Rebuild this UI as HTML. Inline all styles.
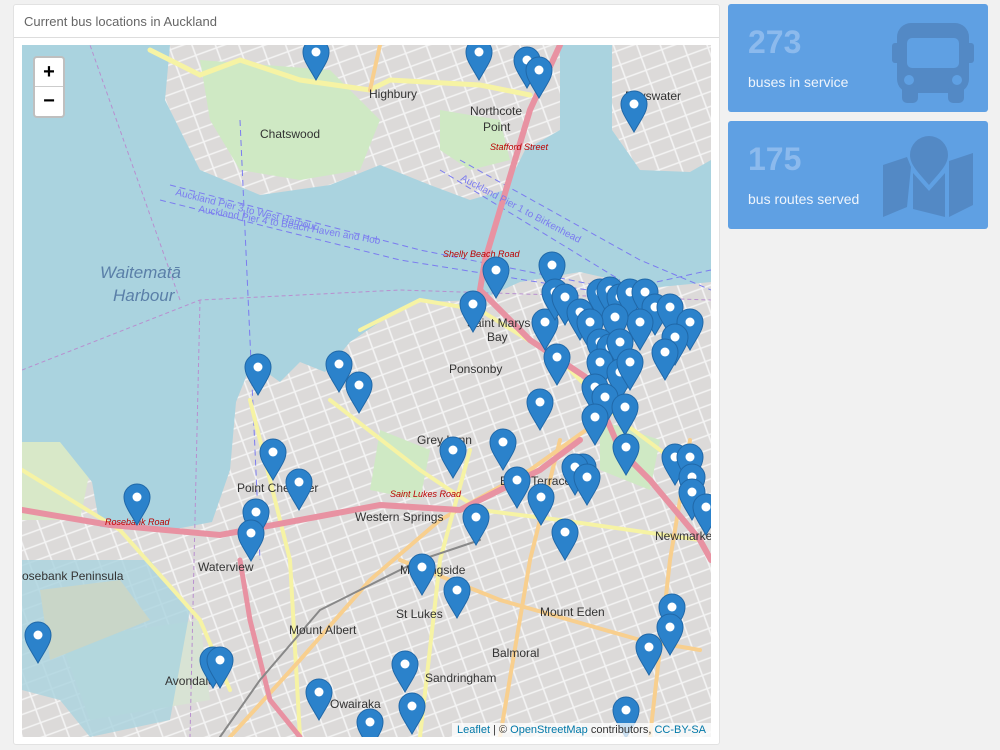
<!DOCTYPE html>
<html><head><meta charset="utf-8"><style>
*{box-sizing:border-box}
body{margin:0;background:#f1f1f1;font-family:"Liberation Sans",sans-serif;width:1000px;height:750px;overflow:hidden;position:relative}
.panel{position:absolute;left:13px;top:4px;width:707px;height:741px;background:#fff;border:1px solid #e2e2e2;border-radius:3px}
.ph{height:33px;border-bottom:1px solid #ddd;padding:9px 10px;font-size:13px;color:#666}
.map{position:absolute;left:22px;top:45px;width:689px;height:692px;overflow:hidden;background:#e2e0df}
.zoom{position:absolute;left:11px;top:11px;width:32px;height:62px;background:#fff;border:2px solid rgba(0,0,0,.25);border-radius:4px}
.zoom div{height:29px;text-align:center;font:bold 20px/29px "Liberation Sans",sans-serif;color:#000}
.zoom div:first-child{border-bottom:1px solid #ccc}
.attr{position:absolute;right:0;bottom:0;background:rgba(255,255,255,.75);font-size:11px;padding:1px 5px;color:#333}
.attr span{color:#0078a8}
.box{position:absolute;left:728px;width:260px;height:108px;background:#5fa0e3;border-radius:3px;color:#fff}
.box .n{position:absolute;left:20px;top:20px;font-size:32px;font-weight:bold;color:#8cbaed}
.box .l{position:absolute;left:20px;top:70px;font-size:14px;color:#eef4fc}
.box svg{position:absolute}
</style></head><body>
<div class="panel"><div class="ph">Current bus locations in Auckland</div></div>
<div class="map">
<svg width="689" height="692" viewBox="22 45 689 692" style="position:absolute;left:0;top:0">
<defs>
<g id="p"><path d="M0,0 C-8,-14 -13,-20 -13,-28 A13,13 0 0 1 13,-28 C13,-20 8,-14 0,0Z" fill="#2b82cb" stroke="#2068a8" stroke-width="1"/><circle cx="0" cy="-28" r="4.5" fill="#fff"/></g>
<pattern id="st" width="22" height="14" patternUnits="userSpaceOnUse" patternTransform="rotate(-20)">
<rect width="22" height="14" fill="#dcdad9"/><path d="M0,7 H22 M11,0 V14" stroke="#f4f4f4" stroke-width="1.6"/></pattern>
</defs>
<rect x="22" y="45" width="689" height="692" fill="url(#st)"/>
<!-- green patches -->
<path d="M200,60 L330,70 L380,120 L360,170 L300,180 L240,170 L210,120Z" fill="#cfe9c4"/>
<path d="M440,110 L500,120 L510,160 L470,170 L440,150Z" fill="#cfe9c4"/>
<path d="M22,420 L70,430 L90,470 L80,520 L22,520Z" fill="#d8e8c8"/>
<path d="M380,430 L430,450 L420,500 L370,490Z" fill="#cfe9c4"/>
<path d="M600,420 L660,440 L650,490 L600,470Z" fill="#cfe9c4"/>
<path d="M60,640 L200,620 L210,700 L90,720Z" fill="#d8e3d4"/>
<!-- water -->
<path d="M22,45 L170,45 L165,100 L200,170 L260,195 L330,185 L380,165 L430,185 L470,200 L505,190 L525,150 L560,130 L560,45 L612,45 L612,130 L640,170 L690,172 L711,160 L711,282 L650,288 L580,272 L520,282 L480,300 L420,302 L380,322 L350,342 L325,372 L300,362 L280,382 L252,362 L236,402 L230,470 L212,522 L160,532 L100,527 L92,482 L60,442 L22,442Z" fill="#aad3df"/>
<path d="M612,45 L711,45 L711,95 L660,100 L630,130 L612,130Z" fill="url(#st)"/>
<path d="M22,560 L150,560 L190,610 L170,720 L90,737 L60,700 L22,690Z" fill="#aad3df" opacity=".8"/>
<path d="M40,590 L120,580 L150,620 L100,640 L50,660Z" fill="#c9d6c8"/>
<!-- ferry lines -->
<g stroke="#7b7bf0" stroke-width="1" stroke-dasharray="6,4" fill="none">
<path d="M170,185 L420,250 L620,290 L711,270"/><path d="M160,200 L400,260 L650,300"/>
<path d="M460,160 L640,260 L711,290"/><path d="M440,170 L620,280"/>
<path d="M240,120 L260,560"/>
</g>
<g stroke="#b88fcf" stroke-width="1" stroke-dasharray="4,3" fill="none">
<path d="M22,370 L200,300 L400,290 L711,300"/><path d="M180,300 L90,45"/><path d="M200,300 L190,737"/>
</g>
<!-- roads -->
<g fill="none" stroke-linecap="round">
<path d="M150,50 L200,75 L240,60 L300,80 L370,90 L390,80 L480,85 L530,95" stroke="#f6f3a4" stroke-width="5"/>
<path d="M370,90 L380,45" stroke="#f8cf8e" stroke-width="4"/>
<path d="M360,330 L420,300 L480,310 L560,360 L620,420 L700,480" stroke="#f6f3a4" stroke-width="4"/>
<path d="M250,400 L270,480 L290,560 L300,737" stroke="#f6f3a4" stroke-width="4"/>
<path d="M330,400 L420,470 L480,510 L560,520 L700,540" stroke="#f6f3a4" stroke-width="4"/>
<path d="M22,470 L120,530 L200,620 L230,690" stroke="#f6f3a4" stroke-width="4"/>
<path d="M230,737 L300,660 L370,580 L440,520 L530,470 L600,420" stroke="#f8cf8e" stroke-width="4"/>
<path d="M400,560 L500,600 L640,640 L700,650" stroke="#f8cf8e" stroke-width="4"/>
<path d="M560,440 L530,560 L500,737" stroke="#f8cf8e" stroke-width="4"/>
<path d="M690,440 L670,560 L650,737" stroke="#f8cf8e" stroke-width="4"/>
<path d="M470,450 L440,560 L420,737" stroke="#f6f3a4" stroke-width="4"/>
<path d="M560,45 L530,110 L515,160 L485,260 L480,290 L530,340 L590,380 L620,450 L650,480 L700,540 L711,560" stroke="#e892a2" stroke-width="6"/>
<path d="M22,510 L110,525 L220,535 L300,520 L380,505 L460,510 L540,470 L580,440" stroke="#e892a2" stroke-width="6"/>
<path d="M240,560 L250,620 L270,700 L300,737" stroke="#e892a2" stroke-width="5"/>
<path d="M220,737 L260,680 L320,610 L420,560 L480,540" stroke="#888" stroke-width="2"/>
</g>
<!-- labels -->
<g font-family="Liberation Sans,sans-serif" font-size="12" fill="#333">
<text x="369" y="98">Highbury</text><text x="260" y="138">Chatswood</text>
<text x="470" y="115">Northcote</text><text x="483" y="131">Point</text>
<text x="625" y="100">Bayswater</text>
<text x="449" y="373">Ponsonby</text><text x="467" y="327">Saint Marys</text><text x="487" y="341">Bay</text>
<text x="417" y="444">Grey Lynn</text><text x="237" y="492">Point Chevalier</text>
<text x="355" y="521">Western Springs</text><text x="198" y="571">Waterview</text>
<text x="22" y="580">osebank Peninsula</text><text x="289" y="634">Mount Albert</text>
<text x="396" y="618">St Lukes</text><text x="540" y="616">Mount Eden</text>
<text x="492" y="657">Balmoral</text><text x="165" y="685">Avondale</text>
<text x="425" y="682">Sandringham</text><text x="330" y="708">Owairaka</text>
<text x="400" y="574">Morningside</text><text x="500" y="485">Eden Terrace</text>
<text x="655" y="540">Newmarket</text>
<text x="100" y="278" font-size="17" font-style="italic" fill="#5a7fa8">Waitematā</text>
<text x="113" y="301" font-size="17" font-style="italic" fill="#5a7fa8">Harbour</text>
<text x="175" y="195" font-size="10" fill="#7b7bf0" transform="rotate(14 175 195)">Auckland Pier 3 to West Harbour</text>
<text x="198" y="212" font-size="10" fill="#7b7bf0" transform="rotate(10 198 212)">Auckland Pier 4 to Beach Haven and Hob</text>
<text x="460" y="180" font-size="10" fill="#7b7bf0" transform="rotate(28 460 180)">Auckland Pier 1 to Birkenhead</text>
<text x="443" y="257" font-size="9" font-style="italic" fill="#b00">Shelly Beach Road</text>
<text x="490" y="150" font-size="9" font-style="italic" fill="#b00">Stafford Street</text>
<text x="105" y="525" font-size="9" font-style="italic" fill="#b00">Rosebank Road</text>
<text x="390" y="497" font-size="9" font-style="italic" fill="#b00">Saint Lukes Road</text>
</g>
<g>
<use href="#p" x="316" y="80"/><use href="#p" x="479" y="80"/><use href="#p" x="527" y="88"/><use href="#p" x="539" y="98"/><use href="#p" x="634" y="132"/>
<use href="#p" x="552" y="293"/><use href="#p" x="496" y="298"/><use href="#p" x="473" y="332"/><use href="#p" x="545" y="350"/><use href="#p" x="555" y="320"/><use href="#p" x="565" y="325"/><use href="#p" x="580" y="340"/><use href="#p" x="600" y="320"/><use href="#p" x="610" y="318"/><use href="#p" x="620" y="325"/><use href="#p" x="630" y="320"/><use href="#p" x="645" y="320"/><use href="#p" x="655" y="335"/><use href="#p" x="670" y="335"/><use href="#p" x="690" y="350"/><use href="#p" x="640" y="350"/><use href="#p" x="615" y="345"/><use href="#p" x="590" y="350"/><use href="#p" x="600" y="370"/><use href="#p" x="610" y="375"/><use href="#p" x="620" y="370"/><use href="#p" x="675" y="365"/><use href="#p" x="665" y="380"/><use href="#p" x="557" y="385"/><use href="#p" x="600" y="390"/><use href="#p" x="620" y="400"/><use href="#p" x="630" y="390"/><use href="#p" x="595" y="415"/><use href="#p" x="605" y="425"/><use href="#p" x="625" y="435"/><use href="#p" x="595" y="445"/><use href="#p" x="540" y="430"/><use href="#p" x="503" y="470"/><use href="#p" x="453" y="478"/><use href="#p" x="626" y="475"/><use href="#p" x="675" y="485"/><use href="#p" x="690" y="485"/><use href="#p" x="692" y="505"/><use href="#p" x="692" y="520"/><use href="#p" x="706" y="535"/><use href="#p" x="583" y="495"/><use href="#p" x="575" y="495"/><use href="#p" x="587" y="505"/><use href="#p" x="517" y="508"/><use href="#p" x="541" y="525"/><use href="#p" x="476" y="545"/><use href="#p" x="565" y="560"/><use href="#p" x="422" y="595"/><use href="#p" x="457" y="618"/><use href="#p" x="273" y="480"/><use href="#p" x="299" y="510"/><use href="#p" x="256" y="540"/><use href="#p" x="251" y="561"/><use href="#p" x="137" y="525"/><use href="#p" x="258" y="395"/><use href="#p" x="339" y="392"/><use href="#p" x="359" y="413"/><use href="#p" x="38" y="663"/><use href="#p" x="213" y="688"/><use href="#p" x="220" y="688"/><use href="#p" x="405" y="692"/><use href="#p" x="319" y="720"/><use href="#p" x="412" y="734"/><use href="#p" x="370" y="750"/><use href="#p" x="626" y="738"/><use href="#p" x="672" y="635"/><use href="#p" x="670" y="655"/><use href="#p" x="649" y="675"/>
</g>
</svg>
<div class="zoom"><div>+</div><div>−</div></div>
<div class="attr"><span>Leaflet</span> | © <span>OpenStreetMap</span> contributors, <span>CC-BY-SA</span></div>
</div>
<div class="box" style="top:4px"><div class="n">273</div><div class="l">buses in service</div>
<svg style="left:164px;top:19px" width="82" height="80" viewBox="0 0 82 80" fill="#5389c5"><rect x="5" y="0" width="72" height="70" rx="14"/><rect x="0" y="20" width="8" height="20" rx="3"/><rect x="74" y="20" width="8" height="20" rx="3"/><rect x="10" y="62" width="16" height="18" rx="5"/><rect x="56" y="62" width="16" height="18" rx="5"/><rect x="15" y="15" width="52" height="30" rx="5" fill="#5fa0e3"/><circle cx="17" cy="57" r="5" fill="#5fa0e3"/><circle cx="65" cy="57" r="5" fill="#5fa0e3"/></svg></div>
<div class="box" style="top:121px"><div class="n">175</div><div class="l">bus routes served</div>
<svg style="left:155px;top:14px" width="92" height="82" viewBox="0 0 92 82" fill="#5389c5"><path d="M0,30 L24,22 L28,32 L24,72 L0,82Z"/><path d="M30,38 L46,56 L62,38 L62,82 L30,74Z"/><path d="M66,26 L90,18 L90,70 L66,82Z"/><path d="M46,50 C36,38 27,30 27,20 A19,19 0 0 1 65,20 C65,30 56,38 46,50Z"/></svg></div>
</body></html>
